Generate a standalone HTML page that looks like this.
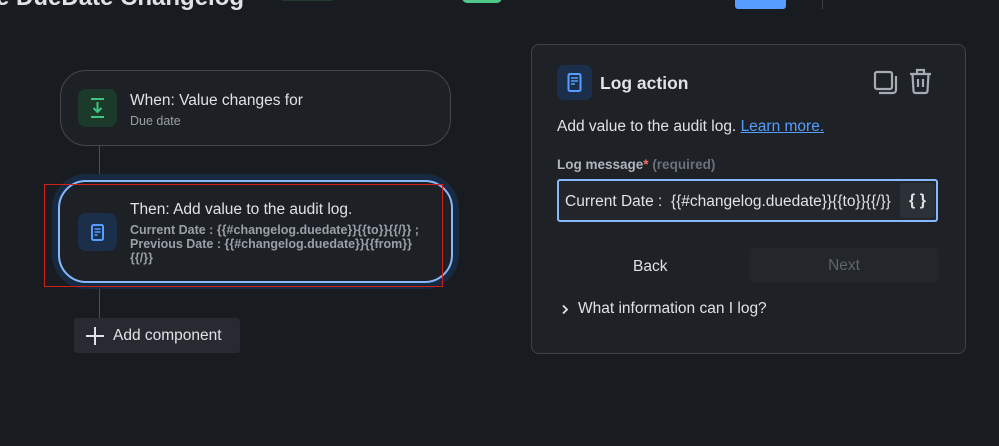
<!DOCTYPE html>
<html><head><style>
*{box-sizing:border-box;margin:0;padding:0}
body{width:999px;height:446px;background:#181b1f;font-family:"Liberation Sans",sans-serif;position:relative;overflow:hidden;color:#dfe2e6}
.a{position:absolute}
</style></head><body>
<div class="a" style="left:-4px;top:-16px;font-size:24px;font-weight:bold;color:#dfe2e6;white-space:nowrap">e DueDate Changelog</div>
<div class="a" style="left:280px;top:-8px;width:54px;height:9px;background:#1d3b2b;border-radius:3px"></div>
<div class="a" style="left:462px;top:-8px;width:40px;height:11px;background:#4fc98a;border-radius:6px"></div>
<div class="a" style="left:735px;top:-6px;width:51px;height:15px;background:#579dff;border-radius:3px"></div>
<div class="a" style="left:822px;top:0;width:1px;height:9px;background:#3a3f46"></div>

<div class="a" style="left:99px;top:146px;width:1px;height:172px;background:#4a4f57"></div>
<div class="a" style="left:60px;top:70px;width:391px;height:76px;border:1px solid #43484f;border-radius:26px;background:#1d2025"></div>
<div class="a" style="left:78px;top:89px;width:39px;height:38px;background:#1b3a2a;border-radius:8px">
<svg width="39" height="38" viewBox="0 0 39 38"><g stroke="#3fc47e" stroke-width="2" fill="none"><path d="M13 10h13M13 28h13M19.5 13v10M15.5 19l4 4 4-4"/></g></svg></div>
<div class="a" style="left:130px;top:92px;font-size:15.5px;color:#dfe2e6">When: Value changes for</div>
<div class="a" style="left:130px;top:114px;font-size:12.5px;color:#9aa0a8">Due date</div>

<div class="a" style="left:52px;top:174px;width:407px;height:115px;border-radius:34px;background:#172a42"></div>
<div class="a" style="left:58px;top:180px;width:395px;height:103px;border:2px solid #85b8ff;border-radius:28px;background:#1d2025"></div>
<div class="a" style="left:78px;top:213px;width:39px;height:38px;background:#1c2f4a;border-radius:8px">
<svg width="39" height="38" viewBox="0 0 39 38"><rect x="14" y="12" width="11" height="15" rx="1.5" stroke="#579dff" stroke-width="2" fill="none"/><path d="M16.5 16h6M16.5 19h6M16.5 22h3" stroke="#579dff" stroke-width="1.5"/></svg></div>
<div class="a" style="left:130px;top:201px;font-size:15.5px;color:#dfe2e6">Then: Add value to the audit log.</div>
<div class="a" style="left:130px;top:223px;font-size:12.5px;font-weight:bold;color:#9aa0a8;line-height:14px">Current Date : {{#changelog.duedate}}{{to}}{{/}} ;<br>Previous Date : {{#changelog.duedate}}{{from}}<br>{{/}}</div>
<div class="a" style="left:44px;top:184px;width:399px;height:103px;border:1.5px solid #d0201a"></div>

<div class="a" style="left:74px;top:318px;width:166px;height:35px;background:#272b31;border-radius:3px"></div>
<svg class="a" style="left:85px;top:326px" width="20" height="20"><path d="M10 1v18M1 10h18" stroke="#dfe2e6" stroke-width="2"/></svg>
<div class="a" style="left:113px;top:327px;font-size:15.5px;color:#dfe2e6">Add component</div>

<div class="a" style="left:531px;top:44px;width:435px;height:310px;border:1px solid #3d424a;border-radius:8px;background:#1e2126"></div>
<div class="a" style="left:557px;top:65px;width:35px;height:35px;background:#1c2f4a;border-radius:7px">
<svg width="35" height="35" viewBox="0 0 35 35"><rect x="11.5" y="9" width="12" height="17" rx="1.5" stroke="#579dff" stroke-width="2" fill="none"/><path d="M14 13h7M14 16h7M14 19h4" stroke="#579dff" stroke-width="1.5"/></svg></div>
<div class="a" style="left:600px;top:73px;font-size:17.5px;font-weight:bold;color:#dfe2e6">Log action</div>
<svg class="a" style="left:873px;top:70px" width="26" height="26" viewBox="0 0 26 26" fill="none" stroke="#a6acb4" stroke-width="2.2"><rect x="2" y="2" width="17" height="17" rx="2"/><path d="M6 23h14a3 3 0 0 0 3-3V6"/></svg>
<svg class="a" style="left:908px;top:68px" width="25" height="27" viewBox="0 0 25 27" fill="none" stroke="#a6acb4" stroke-width="2.2"><path d="M2 6h21M9 6V2h7v4M4.5 6l1 17a2 2 0 0 0 2 2h10a2 2 0 0 0 2-2l1-17M10 11v8M15 11v8"/></svg>
<div class="a" style="left:557px;top:118px;font-size:15.5px;color:#dfe2e6">Add value to the audit log. <span style="color:#579dff;text-decoration:underline">Learn more.</span></div>
<div class="a" style="left:557px;top:157px;font-size:13.5px;font-weight:bold;color:#b0b6bd">Log message<span style="color:#f87168">*</span> <span style="color:#6b727b">(required)</span></div>
<div class="a" style="left:557px;top:179px;width:381px;height:43px;border:2px solid #85b8ff;border-radius:3px;background:#22262b;overflow:hidden">
<div class="a" style="left:6px;top:12px;font-size:15.5px;color:#dfe2e6;white-space:nowrap;width:332px;overflow:hidden">Current Date :&nbsp; {{#changelog.duedate}}{{to}}{{/}}</div>
<div class="a" style="left:341px;top:2px;width:35px;height:35px;background:#2c3137;border-radius:3px;font-size:16px;font-weight:bold;text-align:center;line-height:35px;color:#dfe2e6">{ }</div></div>
<div class="a" style="left:633px;top:258px;font-size:15.5px;color:#dfe2e6">Back</div>
<div class="a" style="left:750px;top:248px;width:188px;height:35px;background:#23272c;border-radius:3px;font-size:15.5px;color:#5e656d;text-align:center;line-height:36px">Next</div>
<svg class="a" style="left:561px;top:304px" width="8" height="11"><path d="M2 1.5l4 4-4 4" stroke="#dfe2e6" stroke-width="1.8" fill="none"/></svg>
<div class="a" style="left:578px;top:300px;font-size:15.5px;color:#dfe2e6">What information can I log?</div>
</body></html>
